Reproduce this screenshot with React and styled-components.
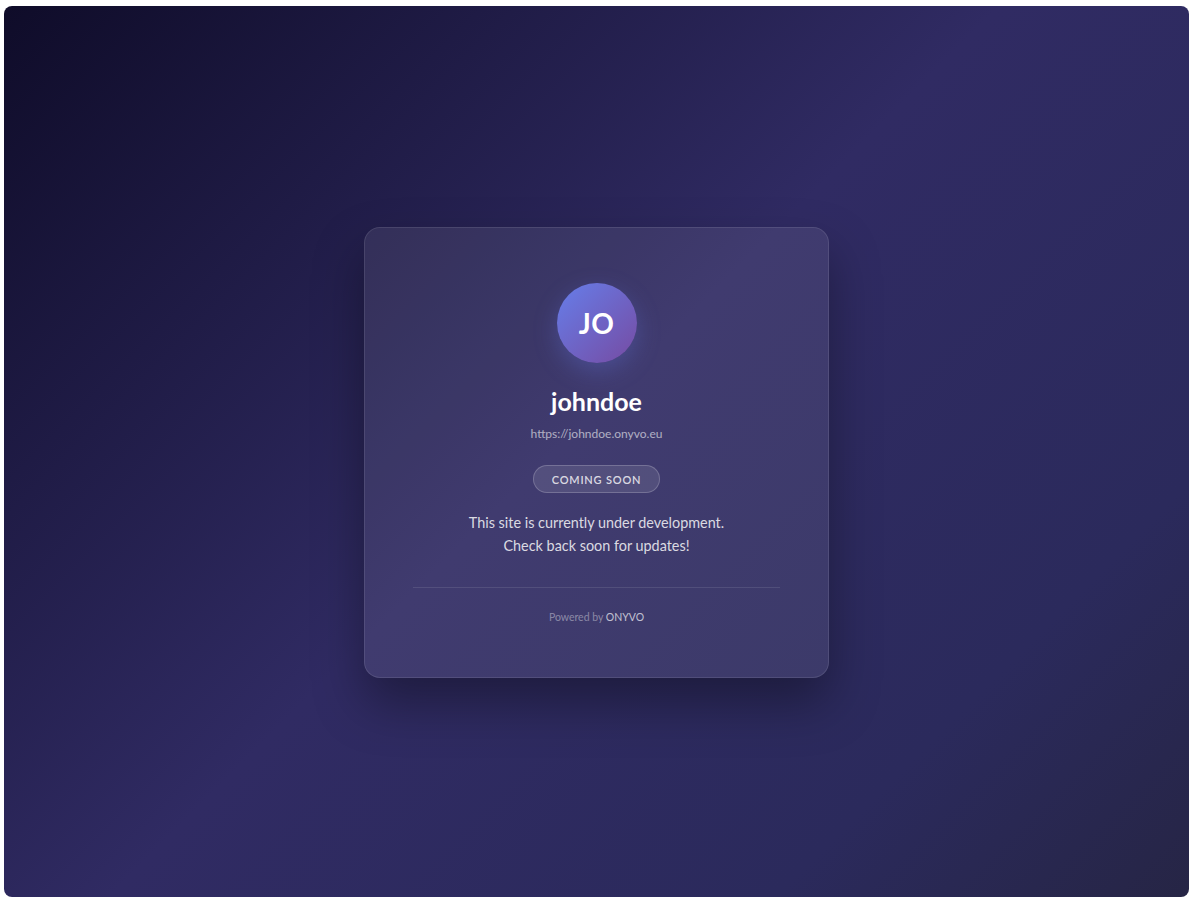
import React from 'react';
import styled, { createGlobalStyle } from 'styled-components';

const GlobalStyle = createGlobalStyle`
  html, body {
    margin: 0;
    padding: 0;
    background: #ffffff;
  }
  * {
    box-sizing: border-box;
  }
  body {
    font-family: Lato, "Open Sans", "Noto Sans", sans-serif;
  }
`;

const Frame = styled.div`
  padding: 6px 4px 3px 4px;
  height: 900px;
`;

const Screen = styled.main`
  height: 100%;
  border-radius: 8px;
  background: linear-gradient(135deg, #0f0c29 0%, #302b63 48%, #2b2a5c 80%, #262545 100%);
  display: flex;
  align-items: center;
  justify-content: center;
  overflow: hidden;
`;

const Card = styled.section`
  width: 465px;
  height: 451px;
  margin-top: 2px;
  padding: 55px 48px 0;
  border-radius: 16px;
  background: rgba(255, 255, 255, 0.08);
  border: 1px solid rgba(255, 255, 255, 0.1);
  box-shadow: 0 25px 50px rgba(0, 0, 0, 0.35);
  display: flex;
  flex-direction: column;
  align-items: center;
  text-align: center;
  color: #ffffff;
`;

const Avatar = styled.div`
  width: 80px;
  height: 80px;
  border-radius: 50%;
  background: linear-gradient(135deg, #667eea 0%, #764ba2 100%);
  box-shadow: 0 8px 24px rgba(102, 126, 234, 0.3);
  display: flex;
  align-items: center;
  justify-content: center;
  font-size: 28px;
  font-weight: 700;
  letter-spacing: 0.5px;
`;

const Name = styled.h1`
  margin: 22px 0 0;
  font-size: 25px;
  line-height: 32px;
  font-weight: 700;
`;

const Url = styled.div`
  margin-top: 9px;
  font-size: 12px;
  line-height: 16px;
  color: rgba(255, 255, 255, 0.6);
`;

const Badge = styled.span`
  margin-top: 23px;
  height: 28px;
  padding: 0 18px;
  display: inline-flex;
  align-items: center;
  border-radius: 14px;
  background: rgba(255, 255, 255, 0.1);
  border: 1px solid rgba(255, 255, 255, 0.2);
  font-size: 11px;
  font-weight: 600;
  letter-spacing: 0.8px;
  color: rgba(255, 255, 255, 0.8);
  text-transform: uppercase;
`;

const Message = styled.p`
  margin: 18px 0 0;
  font-size: 14.4px;
  line-height: 23px;
  color: rgba(255, 255, 255, 0.82);
`;

const Divider = styled.hr`
  align-self: stretch;
  margin: 30px 0 0;
  border: 0;
  border-top: 1px solid rgba(255, 255, 255, 0.1);
`;

const Footer = styled.footer`
  margin-top: 22px;
  font-size: 10.5px;
  line-height: 14px;
  color: rgba(255, 255, 255, 0.4);
`;

const Brand = styled.span`
  color: rgba(255, 255, 255, 0.7);
`;

export default function App() {
  return (
    <>
      <GlobalStyle />
      <Frame>
        <Screen>
          <Card>
            <Avatar>JO</Avatar>
            <Name>johndoe</Name>
            <Url>https://johndoe.onyvo.eu</Url>
            <Badge>Coming Soon</Badge>
            <Message>
              This site is currently under development.
              <br />
              Check back soon for updates!
            </Message>
            <Divider />
            <Footer>
              Powered by <Brand>ONYVO</Brand>
            </Footer>
          </Card>
        </Screen>
      </Frame>
    </>
  );
}
